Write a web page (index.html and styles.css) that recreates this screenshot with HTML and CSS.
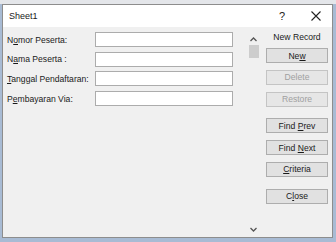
FILE: index.html
```html
<!DOCTYPE html>
<html lang="en">
<head>
  <meta charset="UTF-8">
  <title>Sheet1</title>
  <link rel="stylesheet" href="styles.css">
</head>
<body>
  <div class="dialog">
    <!-- Title bar -->
    <div class="titlebar">
      <span class="title">Sheet1</span>
      <span class="help">?</span>
      <svg class="close-x" width="10" height="10" viewBox="0 0 10 10">
        <path d="M0.5 0.5 L9.5 9.5 M9.5 0.5 L0.5 9.5" stroke="#222" stroke-width="1.1" fill="none"/>
      </svg>
    </div>

    <div class="body">
      <!-- Fields -->
      <div class="fields">
        <div class="row"><label>N<u>o</u>mor Peserta:</label><input type="text"></div>
        <div class="row"><label>N<u>a</u>ma Peserta :</label><input type="text"></div>
        <div class="row"><label><u>T</u>anggal Pendaftaran:</label><input type="text"></div>
        <div class="row"><label>P<u>e</u>mbayaran Via:</label><input type="text"></div>
      </div>

      <!-- Scrollbar -->
      <div class="scroll">
        <svg class="arrow" width="7" height="5" viewBox="0 0 7 5">
          <path d="M0.5 4 L3.5 1 L6.5 4" stroke="#555" stroke-width="1.3" fill="none"/>
        </svg>
        <div class="thumb"></div>
        <div class="track"></div>
        <svg class="arrow" width="7" height="5" viewBox="0 0 7 5">
          <path d="M0.5 1 L3.5 4 L6.5 1" stroke="#555" stroke-width="1.3" fill="none"/>
        </svg>
      </div>

      <!-- Buttons -->
      <div class="buttons">
        <div class="record">New Record</div>
        <button>Ne<u>w</u></button>
        <button class="off">Delete</button>
        <button class="off">Restore</button>
        <button class="sep">Find <u>P</u>rev</button>
        <button>Find <u>N</u>ext</button>
        <button><u>C</u>riteria</button>
        <button class="sep">C<u>l</u>ose</button>
      </div>
    </div>
  </div>
</body>
</html>
```

FILE: styles.css
```css
body {
  margin: 0;
  width: 336px;
  height: 242px;
  background: linear-gradient(#e4e6ea 0 4px, #a8bbd4 4px);
  font-family: "Liberation Sans", Arial, sans-serif;
  font-size: 8.6px;
  color: #1a1a1a;
  overflow: hidden;
}

.dialog {
  margin: 4px 3px 0 2px;
  height: 234px;
  border: 1px solid #8d8d8d;
  background: #f0f0f0;
  display: flex;
  flex-direction: column;
  box-sizing: border-box;
}

.titlebar {
  height: 22px;
  background: #fff;
  display: flex;
  align-items: center;
  padding: 0 0 0 6px;
}

.title {
  flex: 1;
  font-size: 9px;
}

.help {
  font-size: 11px;
  width: 12px;
  margin-right: 20px;
}

.close-x {
  margin-right: 11px;
}

.body {
  flex: 1;
  display: flex;
}

.fields {
  width: 238px;
  padding: 5px 0 0 4px;
  display: flex;
  flex-direction: column;
  gap: 4.7px;
}

.row {
  display: flex;
  align-items: center;
  height: 15px;
}

.row label {
  width: 88px;
}

.row input {
  width: 138px;
  height: 15px;
  box-sizing: border-box;
  border: 1px solid #acacac;
  background: #fff;
  margin: 0;
  padding: 0;
}

.scroll {
  width: 11px;
  margin-left: 3px;
  padding-top: 10px;
  display: flex;
  flex-direction: column;
  align-items: center;
}

.thumb {
  width: 10px;
  height: 13px;
  background: #cdcdcd;
  margin-top: 3px;
}

.track {
  flex: 1;
}

.arrow {
  flex: none;
}

.scroll .arrow:last-child {
  margin-bottom: 5px;
}

.buttons {
  width: 62px;
  margin-left: 7px;
  padding-top: 5px;
  display: flex;
  flex-direction: column;
}

.record {
  text-align: center;
  height: 11px;
  margin-bottom: 5px;
}

button {
  height: 15px;
  margin: 0 0 6.8px;
  padding: 0;
  font-family: inherit;
  font-size: 8.6px;
  color: #1a1a1a;
  background: #e1e1e1;
  border: 1px solid #adadad;
}

button.off {
  color: #a0a0a0;
  background: #e6e6e6;
  border-color: #c4c4c4;
}

button.sep {
  margin-top: 5px;
}
```
